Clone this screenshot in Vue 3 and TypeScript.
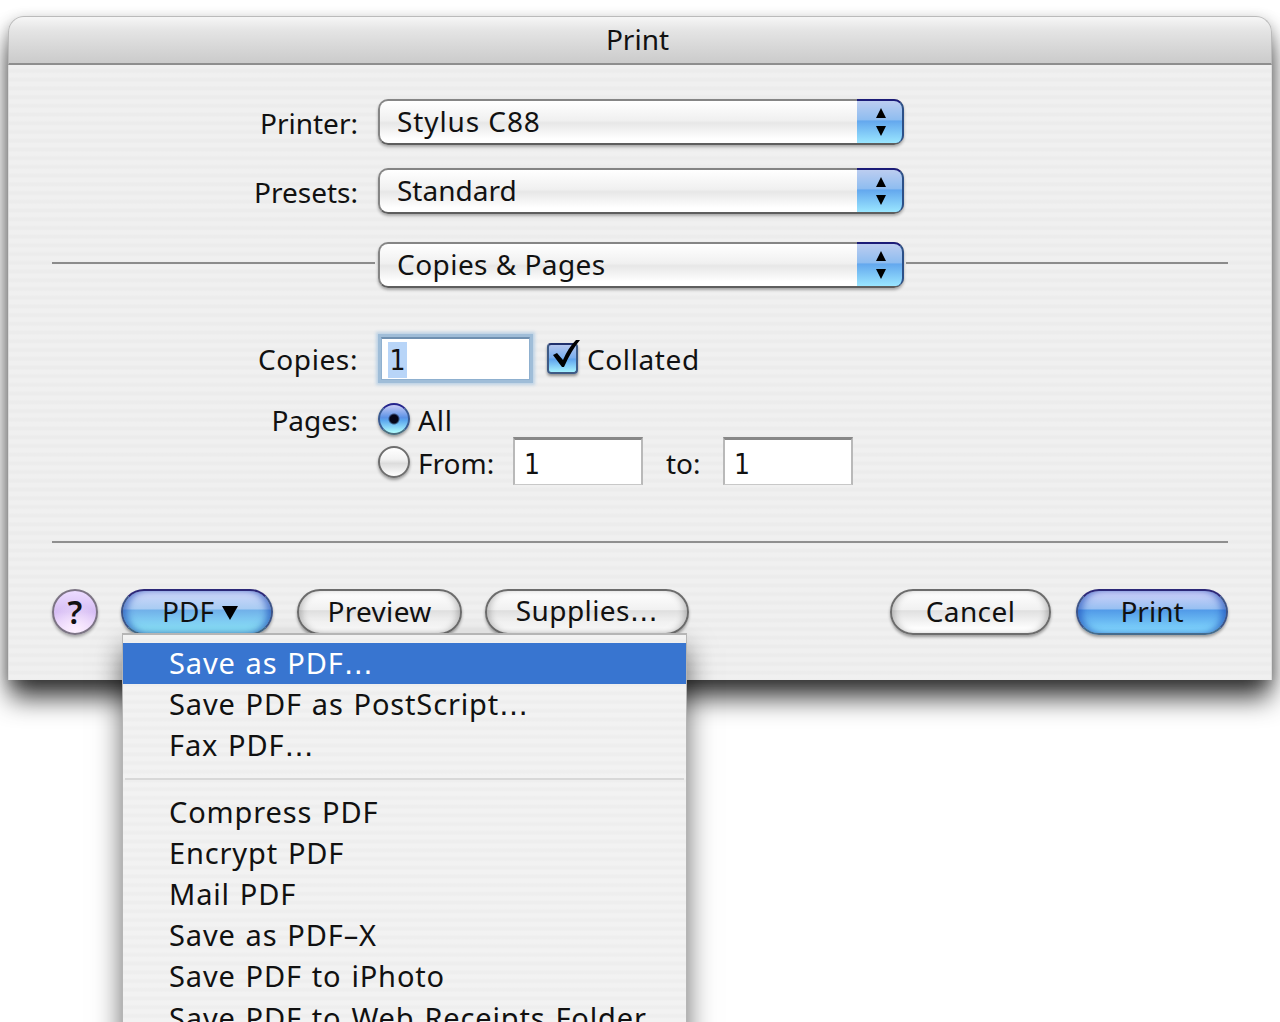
<template>
  <div class="desktop">
    <div class="dialog">
      <header class="titlebar"><span>Print</span></header>

      <div class="body">
        <div class="row printer-row">
          <label class="label">Printer:</label>
          <div class="popup">
            <span class="popup-text printer">{{ printer }}</span>
            <span class="popup-cap">
              <svg width="12" height="28" viewBox="0 0 12 28"><path d="M6 0L11 10H1ZM1 18H11L6 28Z" /></svg>
            </span>
          </div>
        </div>

        <div class="row presets-row">
          <label class="label">Presets:</label>
          <div class="popup">
            <span class="popup-text">{{ preset }}</span>
            <span class="popup-cap">
              <svg width="12" height="28" viewBox="0 0 12 28"><path d="M6 0L11 10H1ZM1 18H11L6 28Z" /></svg>
            </span>
          </div>
        </div>

        <div class="section-row">
          <span class="rule rule-left"></span>
          <div class="popup">
            <span class="popup-text section">{{ section }}</span>
            <span class="popup-cap">
              <svg width="12" height="28" viewBox="0 0 12 28"><path d="M6 0L11 10H1ZM1 18H11L6 28Z" /></svg>
            </span>
          </div>
          <span class="rule rule-right"></span>
        </div>

        <div class="row copies-row">
          <label class="label copies">Copies:</label>
          <div class="field focused"><span class="selected">{{ copies }}</span></div>
          <div class="checkbox" @click="collated = !collated">
            <svg v-if="collated" width="34" height="36" viewBox="0 0 34 36">
              <path d="M6 16L10 14L16 21Q21 9 29 1L33 1Q24 12 17 28L15 28Z" />
            </svg>
          </div>
          <span class="collated">Collated</span>
        </div>

        <div class="row pages-row">
          <label class="label">Pages:</label>
          <span :class="['radio', { on: range === 'all' }]" @click="range = 'all'"></span>
          <span class="radio-text all">All</span>
        </div>

        <div class="row from-row">
          <span class="label"></span>
          <span :class="['radio', { on: range === 'from' }]" @click="range = 'from'"></span>
          <span class="radio-text from">From:</span>
          <div class="field small">{{ from }}</div>
          <span class="to">to:</span>
          <div class="field small">{{ to }}</div>
        </div>

        <div class="divider"></div>

        <footer class="buttons">
          <button class="help">?</button>
          <div class="pdf-wrap">
            <button class="pill blue pdf" @click="menuOpen = !menuOpen">
              <span>PDF</span>
              <svg width="18" height="16" viewBox="0 0 18 16"><path d="M1 1H17L9 15Z" /></svg>
            </button>
            <ul v-if="menuOpen" class="menu">
              <template v-for="(item, i) in menuItems" :key="i">
                <li v-if="item.divider" class="menu-divider"></li>
                <li v-else :class="['menu-item', { active: i === activeItem }]">
                  {{ item.label }}<span v-if="item.opensDialog" class="dots">…</span>
                </li>
              </template>
            </ul>
          </div>
          <button class="pill preview">Preview</button>
          <button class="pill supplies">Supplies<span class="dots">…</span></button>
          <button class="pill cancel">Cancel</button>
          <button class="pill blue print">Print</button>
        </footer>
      </div>
    </div>
  </div>
</template>

<script setup lang="ts">
import { ref } from 'vue';

type PageRange = 'all' | 'from';

interface MenuItem {
  label?: string;
  opensDialog?: boolean;
  divider?: boolean;
}

const printer = ref('Stylus C88');
const preset = ref('Standard');
const section = ref('Copies & Pages');
const copies = ref(1);
const collated = ref(true);
const range = ref<PageRange>('all');
const from = ref(1);
const to = ref(1);

const menuOpen = ref(true);
const activeItem = ref(0);
const menuItems: MenuItem[] = [
  { label: 'Save as PDF', opensDialog: true },
  { label: 'Save PDF as PostScript', opensDialog: true },
  { label: 'Fax PDF', opensDialog: true },
  { divider: true },
  { label: 'Compress PDF' },
  { label: 'Encrypt PDF' },
  { label: 'Mail PDF' },
  { label: 'Save as PDF–X' },
  { label: 'Save PDF to iPhoto' },
  { label: 'Save PDF to Web Receipts Folder' }
];
</script>

<style>
body {
  margin: 0;
  background: #fff;
}
</style>

<style scoped>
.desktop {
  box-sizing: border-box;
  width: 1280px;
  height: 1022px;
  padding: 16px 8px 0;
  overflow: hidden;
  background: #fff;
  color: #111;
  font-family: 'Noto Sans', 'Open Sans', sans-serif;
  font-size: 28px;
  line-height: 40px;
  white-space: nowrap;
}

.dialog {
  display: flex;
  flex-direction: column;
  height: 664px;
  border-radius: 16px 16px 0 0;
  box-shadow: 0 20px 26px -2px rgba(0, 0, 0, 0.76), 0 4px 14px rgba(0, 0, 0, 0.25);
}

.titlebar {
  box-sizing: border-box;
  display: flex;
  justify-content: center;
  height: 49px;
  padding: 2px 5px 0 0;
  border: 1px solid #bbb;
  border-bottom: 2px solid #8e8e8e;
  border-radius: 16px 16px 0 0;
  background: linear-gradient(#f6f6f6, #e4e4e4 30%, #cbcbcb);
}

.body {
  box-sizing: border-box;
  flex: 1;
  display: flex;
  flex-direction: column;
  padding-top: 34px;
  border-left: 1px solid #dcdcdc;
  border-right: 1px solid #dcdcdc;
  background: repeating-linear-gradient(#f0f0f0 0, #f0f0f0 3px, #ececec 5px, #ececec 7px, #f0f0f0 8.72px);
}

.row {
  display: flex;
  align-items: center;
}

.label {
  width: 349px;
  margin-right: 20px;
  padding-top: 2px;
  text-align: right;
}

.copies {
  padding: 0 0 2px;
  letter-spacing: 0.6px;
}

.popup {
  box-sizing: border-box;
  display: flex;
  justify-content: space-between;
  width: 526px;
  height: 46px;
  border: 2px solid #858585;
  border-bottom-color: #5e5e5e;
  border-radius: 10px;
  background: linear-gradient(#fff, #f0f0f0 46%, #e7e7e7 52%, #fff 90%);
  box-shadow: 0 2px 3px rgba(0, 0, 0, 0.3);
}

.popup-text {
  padding-left: 17px;
}

.printer {
  letter-spacing: 0.9px;
}

.section {
  letter-spacing: 0.45px;
}

.popup-cap {
  display: flex;
  justify-content: center;
  width: 45px;
  height: 42px;
  margin: -2px -2px 0 0;
  border-top: 2px solid #1c1c78;
  border-right: 2px solid #2c5088;
  border-radius: 0 10px 8px 0;
  background: linear-gradient(#bccdf0, #8fbdf0 44%, #64a8ee 48%, #9ae6ff);
}

.popup-cap svg {
  margin: 7px 0 0 3px;
}

.presets-row {
  margin-top: 23px;
}

.section-row {
  display: flex;
  align-items: center;
  margin: 28px 43px 0;
}

.rule {
  height: 2px;
  margin-top: -4px;
  background: #8b8b8b;
}

.rule-left {
  width: 323px;
  margin-right: 3px;
}

.rule-right {
  flex: 1;
  margin-left: 2px;
}

.copies-row {
  height: 46px;
  margin-top: 49px;
}

.field {
  box-sizing: border-box;
  background: #fff;
}

.focused {
  width: 149px;
  height: 43px;
  margin: -4px 17px 0 3px;
  padding: 3px 0 0 6px;
  border: 1px solid #8fb0cf;
  border-top: 2px solid #6f90b0;
  box-shadow: 0 0 0 3px #9fbdd8, 0 0 3px 5px #bdd2e5;
}

.selected {
  display: block;
  width: 19px;
  height: 36px;
  background: #b8d5f8;
  font-family: 'DejaVu Sans Condensed', 'DejaVu Sans', sans-serif;
  line-height: 38px;
  text-align: center;
}

.checkbox {
  box-sizing: border-box;
  position: relative;
  width: 31px;
  height: 31px;
  margin: -3px 9px 0 0;
  border: 2px solid #3e5a85;
  border-top-color: #20306c;
  border-radius: 4px;
  background: linear-gradient(#b4c6ee, #79aeee 48%, #5ea2ec 52%, #a5f2ff);
  box-shadow: 0 2px 3px rgba(0, 0, 0, 0.4);
}

/* the tick pokes out of the box */
.checkbox svg {
  position: absolute;
  left: -2px;
  top: -6px;
}

.collated {
  padding-bottom: 2px;
  letter-spacing: 0.6px;
}

.pages-row {
  height: 40px;
  margin-top: 16px;
}

.radio {
  box-sizing: border-box;
  width: 32px;
  height: 32px;
  margin-right: 8px;
  border: 2px solid #6e6e6e;
  border-radius: 50%;
  background: linear-gradient(#fff, #f2f2f2 40%, #dcdcdc 55%, #fff);
  box-shadow: 0 2px 3px rgba(0, 0, 0, 0.35);
}

.radio.on {
  border-color: #24248c #3a5a90 #4a6f80;
  background:
    radial-gradient(circle, #060618 4px, transparent 6px),
    linear-gradient(#c8ccf6, #5c92e6 45%, #5ba6ee 55%, #b2ffff);
}

.all {
  padding-top: 2px;
  letter-spacing: 0.8px;
}

.from-row {
  height: 48px;
  margin-top: -2px;
}

.from-row .radio {
  margin-top: 2px;
}

.from {
  width: 95px;
  padding-top: 3px;
}

.small {
  width: 130px;
  height: 48px;
  padding: 5px 0 0 9px;
  border: 2px solid #b9b9b9;
  border-top: 3px solid #888;
  border-bottom: 1px solid #c8c8c8;
  font-family: 'DejaVu Sans Condensed', 'DejaVu Sans', sans-serif;
}

.to {
  width: 57px;
  padding: 3px 0 0 23px;
}

.divider {
  height: 2px;
  margin: 56px 43px 0;
  background: #8f8f8f;
}

.buttons {
  display: flex;
  margin: 46px 43px 0;
}

button {
  box-sizing: border-box;
  height: 46px;
  padding: 0;
  color: #111;
  font: inherit;
  line-height: 38px;
}

.help {
  width: 46px;
  margin-right: 23px;
  border: 2px solid #7c7484;
  border-radius: 50%;
  background: radial-gradient(circle at 50% 95%, #fdf0ff, transparent 60%), linear-gradient(#ecdcff, #d6bdf4 50%, #eed9ff);
  box-shadow: 0 2px 3px rgba(0, 0, 0, 0.3);
  font-size: 32px;
  font-weight: 600;
}

.pdf-wrap {
  position: relative;
  margin-right: 24px;
}

.pill {
  border: 2px solid #6c6c6c;
  border-radius: 23px;
  padding-bottom: 2px;
  background: linear-gradient(#fff, #f1f1f1 44%, #e0e0e0 47%, #fff 90%);
  box-shadow: 0 2px 3px rgba(0, 0, 0, 0.35), inset 5px 0 7px -3px rgba(0, 0, 0, 0.25), inset -5px 0 7px -3px rgba(0, 0, 0, 0.25);
}

.blue {
  border-color: #2c2878 #3d5488 #456b8c;
  background: linear-gradient(#d2d2fa, #98c0f2 42%, #529be8 46%, #85dcff);
  box-shadow: 0 2px 3px rgba(0, 0, 0, 0.35), inset 6px 0 7px -2px rgba(24, 70, 180, 0.6), inset -6px 0 7px -2px rgba(24, 70, 180, 0.6);
}

.pdf {
  display: flex;
  align-items: center;
  width: 152px;
  padding-left: 39px;
  background: linear-gradient(#d2d8fa, #a9ccf3 42%, #72b2ea 46%, #90ecff);
}

.pdf svg {
  margin: 4px 0 0 7px;
}

.preview {
  width: 165px;
  margin-right: 23px;
  letter-spacing: 0.3px;
}

.supplies {
  width: 204px;
  letter-spacing: 0.4px;
}

.dots {
  font-family: 'DejaVu Sans', sans-serif;
}

.cancel {
  width: 161px;
  margin: 0 25px 0 auto;
  letter-spacing: 0.4px;
}

.print {
  width: 152px;
}

.menu {
  box-sizing: border-box;
  position: absolute;
  left: 1px;
  top: 44px;
  z-index: 1;
  width: 565px;
  height: 440px;
  margin: 0;
  padding: 8px 0 0;
  border: 2px solid #b5b5b5;
  border-width: 2px 1px;
  background: repeating-linear-gradient(#f2f2f2 0, #f2f2f2 3px, #eee 5px, #eee 7px, #f2f2f2 8.72px);
  box-shadow: 0 16px 26px rgba(0, 0, 0, 0.6);
  list-style: none;
}

.menu-item {
  height: 41.2px;
  padding-left: 46px;
  font-size: 29px;
  line-height: 39px;
  letter-spacing: 0.85px;
  word-spacing: 1.5px;
}

.menu-item.active {
  background: #3875d0;
  color: #fff;
}

.menu-divider {
  height: 2px;
  margin: 11px 2px 12px;
  background: #d8d8d8;
}
</style>
